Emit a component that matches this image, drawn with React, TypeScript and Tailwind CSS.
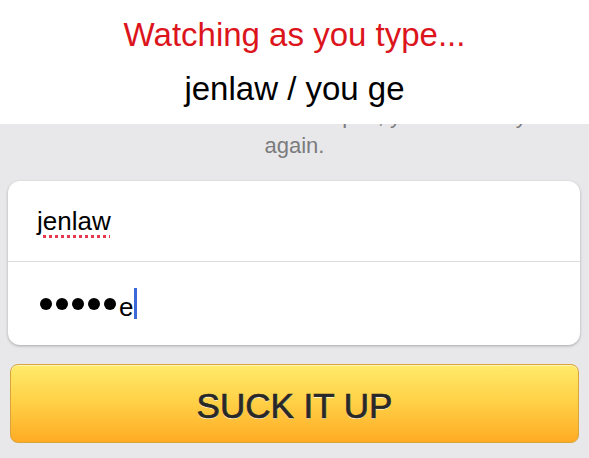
import React from "react";

export default function App() {
  const font = { fontFamily: '"Liberation Sans", Arial, Helvetica, sans-serif' };
  return (
    <div
      className="w-[589px] h-[458px] bg-[#e8e8ea] overflow-hidden flex flex-col"
      style={font}
    >
      <header className="relative z-10 bg-white h-[124px] shrink-0 flex flex-col items-center">
        <div className="pt-[18px] text-[33px] leading-none text-[#dc141c]">
          Watching as you type...
        </div>
        <div className="mt-[21px] text-[33px] leading-none text-black">
          jenlaw / you ge
        </div>
      </header>

      <section className="overflow-hidden shrink-0">
        <p className="-mt-[23px] text-center text-[22px] leading-[30px] text-[#7b7b7d] px-[40px]">
          Whether out of boredom or spite, you should try
          <br />
          again.
        </p>
      </section>

      <div className="mt-[20px] mx-[8px] w-[572px] h-[164px] bg-white rounded-[12px] shadow-[0_1px_3px_rgba(0,0,0,0.28)] flex flex-col shrink-0">
        <div className="h-[81px] flex items-center pl-[29px] border-b border-[#dcdcde]">
          <span className="text-[26px] leading-none text-black underline decoration-dotted decoration-[#e8364f] decoration-[3px] underline-offset-[5px]">
            jenlaw
          </span>
        </div>
        <div className="flex-1 flex items-center pl-[32px]">
          <div className="flex items-center gap-[4px]">
            <span className="w-[12px] h-[12px] rounded-full bg-black" />
            <span className="w-[12px] h-[12px] rounded-full bg-black" />
            <span className="w-[12px] h-[12px] rounded-full bg-black" />
            <span className="w-[12px] h-[12px] rounded-full bg-black" />
            <span className="w-[12px] h-[12px] rounded-full bg-black" />
          </div>
          <span className="ml-[3px] text-[26px] leading-none text-black mt-[6px]">e</span>
          <span className="ml-[1px] w-[3px] h-[31px] bg-[#3b6ad8]" />
        </div>
      </div>

      <button
        className="mt-[19px] mx-[10px] w-[569px] h-[79px] shrink-0 rounded-[8px] border border-[#d9a43c] bg-gradient-to-b from-[#ffeb6a] via-[#ffcf44] to-[#ffab23] flex items-center justify-center pt-[3px] shadow-[inset_0_1px_0_rgba(255,255,255,0.5)]"
        style={font}
      >
        <span className="text-[35px] leading-none text-[#282828] [-webkit-text-stroke:0.7px_#282828] [text-shadow:0_1px_0_rgba(255,255,255,0.85)]">
          SUCK IT UP
        </span>
      </button>
    </div>
  );
}
